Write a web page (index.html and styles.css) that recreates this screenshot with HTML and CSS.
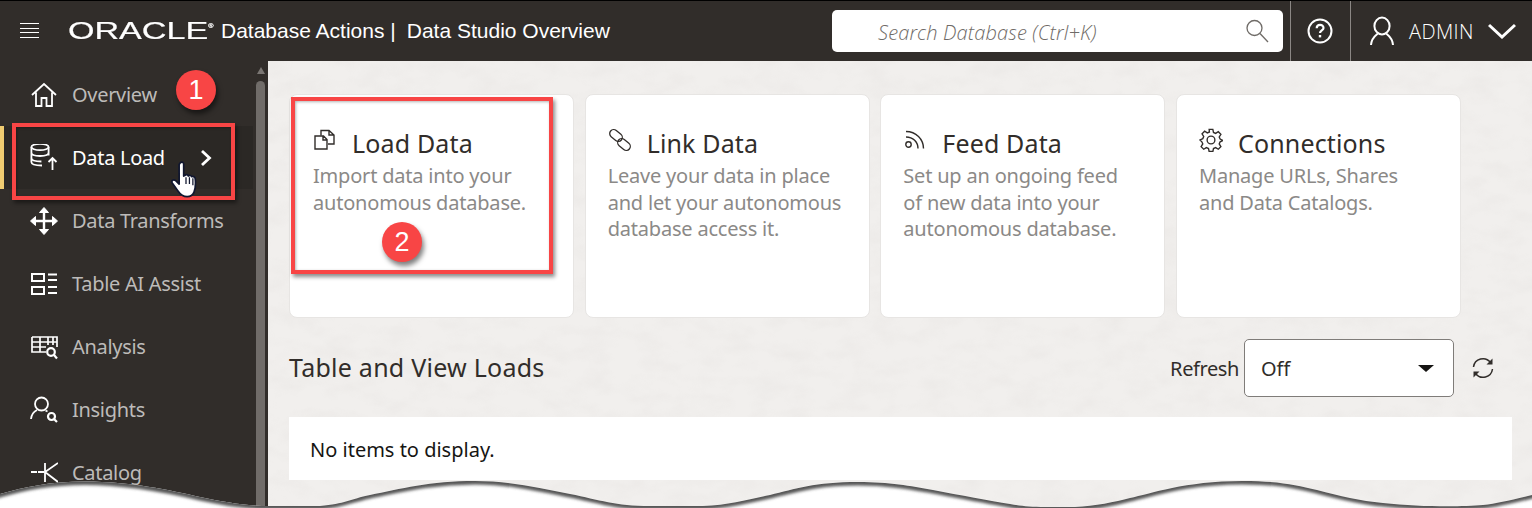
FILE: index.html
```html
<!DOCTYPE html>
<html lang="en">
<head>
<meta charset="utf-8">
<title>Data Studio Overview</title>
<link rel="stylesheet" href="styles.css">
</head>
<body>
<div class="page">
  <header class="topbar">
    <svg class="burger" width="19" height="15" viewBox="0 0 19 15"><path d="M0 .5h19M0 5.500h19M0 9.500h19M0 14.500h19" stroke="#fff" stroke-width="1"/></svg>
    <span class="logo">ORACLE<sup class="reg">®</sup></span>
    <span class="apptitle">Database Actions |</span>
    <span class="apptitle pagetitle">Data Studio Overview</span>
    <div class="search">
      <span class="search-text">Search Database (Ctrl+K)</span>
      <svg width="26" height="26" viewBox="0 0 26 26" fill="none" stroke="#6f6b67" stroke-width="1.3"><circle cx="10.5" cy="10" r="7.5"/><path d="M16 15.500l8 8.500"/></svg>
    </div>
    <div class="tool help">
      <svg width="26" height="26" viewBox="0 0 26 26" fill="none" stroke="#fff" stroke-width="2"><circle cx="13" cy="13" r="11.500"/><path d="M9.700 10.300c0-4.400 6.800-4.400 6.800-.3 0 2.400-3.500 2.500-3.500 5" stroke-width="2.200"/><path d="M13 17v2.400" stroke-width="2.400"/></svg>
    </div>
    <div class="tool user">
      <svg width="26" height="30" viewBox="0 0 26 30" fill="none" stroke="#fff" stroke-width="2"><ellipse cx="13" cy="10" rx="7.600" ry="8.400"/><path d="M9 17.500C6 20 2.500 22 2 29M17 17.500C20 20 23.500 22 24 29"/></svg>
      <span class="admin">ADMIN</span>
      <svg width="28" height="16" viewBox="0 0 28 16" fill="none" stroke="#fff" stroke-width="3"><path d="M1 2l13 12L27 2"/></svg>
    </div>
  </header>

  <div class="body">
    <nav class="side">
      <div class="nav">
        <a class="item"><svg class="ico" width="28" height="28" viewBox="0 0 28 28" fill="none" stroke="#fff" stroke-width="1.800"><path d="M2 14L14 3l12 11M6 11.500V25h5.500v-8h5v8H22V11.500"/></svg><span>Overview</span></a>
        <a class="item active"><svg class="ico" width="28" height="28" viewBox="0 0 28 28" fill="none" stroke="#fff" stroke-width="1.800"><ellipse cx="10" cy="3" rx="8.600" ry="3.200"/><path d="M1.400 3v15c0 2 3 3.500 10.600 3.500M18.600 3v8.500M1.400 8.500c0 2 3.500 3.500 8.600 3.500s8.600-1.500 8.600-3.500M1.400 14c0 2 3.500 3.500 10 3.500"/><path d="M22.500 26v-12M18.500 18L22.500 14l4 4"/></svg><span>Data Load</span><svg class="chev" width="14" height="18" viewBox="0 0 14 18" fill="none" stroke="#fff" stroke-width="2.800"><path d="M3 2l7.500 7L3 16"/></svg></a>
        <a class="item"><svg class="ico" width="28" height="28" viewBox="0 0 28 28" fill="#fff" stroke="#fff" stroke-width="2.400"><path d="M14 3v22M2 14h24" fill="none"/><path d="M14 .5l4.500 5h-9zM14 27.500l4.500-5h-9zM.5 14l5-4.500v9zM27.500 14l-5-4.500v9z" stroke-width="1"/></svg><span>Data Transforms</span></a>
        <a class="item"><svg class="ico" width="28" height="28" viewBox="0 0 28 28" fill="none" stroke="#fff" stroke-width="2"><rect x="2" y="4" width="12" height="7"/><rect x="2" y="17" width="12" height="7"/><path d="M18 4.500h9M18 10h9M18 17h9M18 23h9"/></svg><span>Table AI Assist</span></a>
        <a class="item"><svg class="ico" width="28" height="28" viewBox="0 0 28 28" fill="none" stroke="#fff" stroke-width="1.700"><path d="M2 4h25v10M2 4v15h14M2 9h25M2 14h14M10 4v15M18 4v8M23 4v8"/><circle cx="21" cy="19" r="3.800" stroke-width="2.200"/><path d="M24 22l3 3.500" stroke-width="2.200"/></svg><span>Analysis</span></a>
        <a class="item"><svg class="ico" width="28" height="28" viewBox="0 0 28 28" fill="none" stroke="#fff" stroke-width="1.800"><ellipse cx="11.500" cy="8" rx="6.500" ry="6.500"/><path d="M7 14c-3 1.500-5.500 4-6 9M15.500 14.500l2 1"/><circle cx="21.500" cy="20.500" r="3.500" stroke-width="2.200"/><path d="M24 23l3 3" stroke-width="2.200"/></svg><span>Insights</span></a>
        <a class="item"><svg class="ico" width="28" height="28" viewBox="0 0 28 28" fill="none" stroke="#fff" stroke-width="1.800"><path d="M1 13h6M8 13h6M28 4L15 13l13 10M15 4v19"/></svg><span>Catalog</span></a>
      </div>
      <div class="scroll"><i class="scroll-up"></i><i class="scroll-thumb"></i></div>
    </nav>

    <main class="main">
      <svg class="grain" width="1264" height="447" aria-hidden="true">
        <filter id="grain"><feTurbulence type="fractalNoise" baseFrequency=".035 .06" numOctaves="3" seed="11"/><feColorMatrix values="0 0 0 0 .55  0 0 0 0 .52  0 0 0 0 .5  1.300 0 0 0 -.52"/></filter>
        <rect width="1264" height="447" filter="url(#grain)" opacity=".14"/>
      </svg>
      <section class="cards">
        <article class="card">
          <h2><svg width="24" height="24" viewBox="0 0 24 24" fill="none" stroke="#312d2a" stroke-width="1.400"><path d="M8 7.500V2.500h8l5 4.500v9h-6M16 2.500V7h5"/><path d="M2 8h8.500L14 11.500V21H2zM10 8v4h4"/></svg>Load Data</h2>
          <p>Import data into your autonomous database.</p>
        </article>
        <article class="card">
          <h2><svg width="24" height="24" viewBox="0 0 24 24" fill="none" stroke="#312d2a" stroke-width="1.300"><rect x="1" y="3.500" width="14" height="8" rx="4" transform="rotate(40 8 7.500)"/><rect x="9" y="12.500" width="14" height="8" rx="4" transform="rotate(40 16 16.500)"/></svg>Link Data</h2>
          <p>Leave your data in place and let your autonomous database access it.</p>
        </article>
        <article class="card">
          <h2><svg width="24" height="24" viewBox="0 0 24 24" fill="none" stroke="#312d2a" stroke-width="1.400"><circle cx="5.500" cy="16.500" r="2.700"/><path d="M3 9c7 0 12 5 12 11.500M3 3.500c10 0 17.500 7.500 17.500 17"/></svg>Feed Data</h2>
          <p>Set up an ongoing feed of new data into your autonomous database.</p>
        </article>
        <article class="card">
          <h2><svg width="24" height="24" viewBox="0 0 26 26" fill="none" stroke="#312d2a" stroke-width="1.500"><circle cx="13" cy="13" r="4.200"/><path d="M11 1.500h4l.7 3.300 2.300 1 2.900-1.800 2.800 2.800-1.800 2.900 1 2.300 3.100 1.500-3.100 1.500-1 2.300 1.800 2.900-2.800 2.800-2.900-1.800-2.300 1-.7 3.300h-4l-.7-3.300-2.300-1-2.900 1.800-2.800-2.800 1.800-2.900-1-2.300L1 13l3.100-1.500 1-2.300-1.800-2.900 2.800-2.800 2.900 1.800 2.300-1z"/></svg>Connections</h2>
          <p>Manage URLs, Shares and Data Catalogs.</p>
        </article>
      </section>

      <section class="loads-head">
        <h1>Table and View Loads</h1>
        <div class="refresh">
          <span class="refresh-label">Refresh</span>
          <div class="select"><span>Off</span><i class="caret"></i></div>
          <svg width="24" height="24" viewBox="0 0 24 24" fill="none" stroke="#312d2a" stroke-width="1.500"><path d="M2.500 11a9.500 9.500 0 0 1 17-4.500M21.500 13a9.500 9.500 0 0 1-17 4.500"/><path d="M21.500 2.500v6h-6z" fill="#312d2a" stroke="none"/><path d="M2.500 21.500v-6h6z" fill="#312d2a" stroke="none"/></svg>
        </div>
      </section>
      <section class="empty">No items to display.</section>
    </main>
  </div>

  <div class="mark mark-1"></div>
  <div class="mark mark-2"></div>
  <div class="badge badge-1">1</div>
  <div class="badge badge-2">2</div>
  <svg class="cursor" width="30" height="39" viewBox="0 0 26 34"><path d="M8 2.500c1.500-1.500 3-.5 3 1.500v10l1-.5c1-1 2.500-1 3 .5 1-1 2.500-.5 3 .5 1-.5 2.500 0 3 1.500.5 4 .5 8-1 12-1 2.500-3 4-6 4-4 0-6-2-8-5l-5-7c-1-2 1-3.500 3-2l3 3V4z" fill="#fff" stroke="#10162f" stroke-width="1.500" stroke-linejoin="round"/><path d="M13 15v6M16 15v6M19 16v6" stroke="#10162f" stroke-width="1.100"/></svg>
  <svg class="torn" width="1532" height="36" viewBox="0 0 1532 36">
    <defs>
      <path id="edge" d="M-10 24 L0 22 C25 15 50 9.500 85 9.500 C130 9.500 170 18 200 25 C225 30 245 34 270 34 L320 34 C345 32 350 27 370 23 C400 17 430 9 475 9 C510 9 540 16 570 22 C600 28 615 34 650 34 L703 34 C730 33 750 27 770 23 C795 17 815 10 858 10 C890 10 910 14 933 18 C960 23 990 29 1010 32 C1020 34 1030 35 1045 35 L1075 35 C1095 34 1115 30 1130 26 C1150 22 1185 9 1242 9 C1280 9 1295 13 1317 18 C1340 24 1360 29 1383 31 C1420 35 1460 35 1483 33 C1500 31 1515 27 1545 20 L1545 60 L-10 60 Z"/>
      <clipPath id="below"><use href="#edge"/></clipPath>
      <filter id="soft" x="-2%" y="-60%" width="104%" height="220%"><feGaussianBlur stdDeviation="1.500"/></filter>
    </defs>
    <use href="#edge" fill="#fff"/>
    <g clip-path="url(#below)"><use href="#edge" fill="none" stroke="#555" stroke-width="7" filter="url(#soft)"/></g>
  </svg>
</div>
</body>
</html>
```
FILE: styles.css
```css
* { box-sizing: border-box; }
html, body { margin: 0; padding: 0; }
body { font-family: "Noto Sans", "Open Sans", sans-serif; background: #fff; }
.page { position: relative; width: 1532px; height: 508px; overflow: hidden; }

.topbar { height: 61px; background: #312d2a; border-top: 1px solid #000; display: flex; align-items: center; color: #fff; }
.burger { margin: -1px 0 0 20px; flex: none; }
.logo { margin-left: 29px; font-family: "Liberation Sans", sans-serif; font-size: 24px; font-weight: 400; transform: scaleX(1.420); transform-origin: left center; width: 153px; flex: none; -webkit-text-stroke: .2px #fff; white-space: nowrap; }
.reg { font-size: 5px; vertical-align: 11px; line-height: 0; }
.apptitle { font-family: "Liberation Sans", sans-serif; font-size: 21px; white-space: nowrap; flex: none; }
.pagetitle { margin-left: 11px; }
.search { margin-left: auto; width: 451px; height: 42px; background: #fff; border-radius: 5px; display: flex; align-items: center; justify-content: space-between; padding: 0 13px 0 46px; color: #6f6b67; }
.search-text { font-family: "Open Sans", sans-serif; font-weight: 300; font-style: italic; font-size: 20px; white-space: nowrap; letter-spacing: .13px; margin-top: 2px; }
.tool { height: 60px; display: flex; align-items: center; border-left: 1px solid #8b8784; flex: none; }
.help { margin-left: 7px; width: 60px; justify-content: center; padding-right: 2px; }
.user { width: 182px; padding-left: 18px; }
.admin { margin: 0 14px 0 14px; font-family: "Open Sans", sans-serif; font-weight: 300; font-size: 20px; letter-spacing: .4px; }

.body { display: flex; height: 447px; }
.side { width: 268px; flex: none; background: #312d2a; display: flex; }
.nav { width: 253px; flex: none; padding-top: 2px; margin-right: 3px; }
.item { height: 63px; display: flex; align-items: center; padding-left: 30px; color: #bdbbb9; font-size: 20px; letter-spacing: -.3px; position: relative; white-space: nowrap; }
.item span { margin-left: 14px; }
.ico { flex: none; }
.active { background: #2b2825; color: #fff; box-shadow: inset 4px 0 0 #f0cc71; }
.chev { margin-left: 34px; }
.scroll { width: 9px; flex: none; position: relative; padding-top: 6px; }
.scroll-up { display: block; width: 0; height: 0; margin: 0 auto 7px; border: 4px solid transparent; border-top: 0; border-bottom: 7px solid #7a7673; }
.scroll-thumb { display: block; width: 9px; height: 440px; background: #706c69; border-radius: 5px 5px 0 0; }

.main { flex: 1; position: relative; padding: 33px 20px 0 21px; background-color: #f1efed; }
.grain { position: absolute; left: 0; top: 0; display: block; }
.cards, .loads-head, .empty { position: relative; }
.cards { display: grid; grid-template-columns: repeat(4, 285px); column-gap: 10.67px; }
.card { height: 224px; background: #fff; border: 1px solid #e7e5e3; border-radius: 8px; padding: 29px 22px 0; }
.card:first-child { padding-left: 23px; }
.card h2 { margin: 0 0 1px; display: flex; align-items: center; height: 38px; font-size: 25px; font-weight: 400; color: #312d2a; letter-spacing: .15px; gap: 15px; white-space: nowrap; }
.card h2 svg { flex: none; margin-top: -6px; }
.card p { margin: 0; font-size: 20px; line-height: 26.500px; color: #8b8987; letter-spacing: -.2px; max-width: 236px; }

.loads-head { display: flex; align-items: center; justify-content: space-between; height: 58px; margin-top: 21px; }
.loads-head h1 { margin: 0 0 3px; font-size: 25px; font-weight: 400; color: #312d2a; letter-spacing: .25px; white-space: nowrap; }
.refresh { display: flex; align-items: center; }
.refresh-label { font-size: 20px; color: #312d2a; letter-spacing: -.4px; margin-right: 5px; }
.select { width: 210px; height: 58px; background: #fff; border: 1px solid #7f7c79; border-radius: 5px; display: flex; align-items: center; justify-content: space-between; padding: 0 19px 0 16px; font-size: 20px; color: #312d2a; margin-right: 17px; }
.caret { width: 0; height: 0; border: 8px solid transparent; border-top: 7px solid #161513; border-bottom: 0; }
.refresh svg { margin-right: 17px; }
.empty { margin-top: 20px; height: 63px; background: #fff; display: flex; align-items: center; padding: 2px 0 0 21px; font-size: 20px; color: #161513; }

.mark { position: absolute; border: 4px solid #f84545; box-shadow: 2px 3px 4px rgba(0,0,0,.45), inset 1px 1px 3px rgba(0,0,0,.3); }
.mark-1 { left: 12px; top: 123px; width: 223px; height: 77px; }
.mark-2 { left: 291px; top: 97px; width: 262px; height: 177px; }
.badge { position: absolute; width: 40px; height: 40px; border-radius: 50%; background: #f84545; color: #fff; font-family: "Liberation Sans", sans-serif; font-size: 27px; display: flex; align-items: center; justify-content: center; box-shadow: 2px 4px 5px rgba(0,0,0,.5); }
.badge-1 { left: 176px; top: 70px; }
.badge-2 { left: 382px; top: 222px; }
.cursor { position: absolute; left: 171px; top: 160px; }
.torn { position: absolute; left: 0; bottom: 0; display: block; }
```
